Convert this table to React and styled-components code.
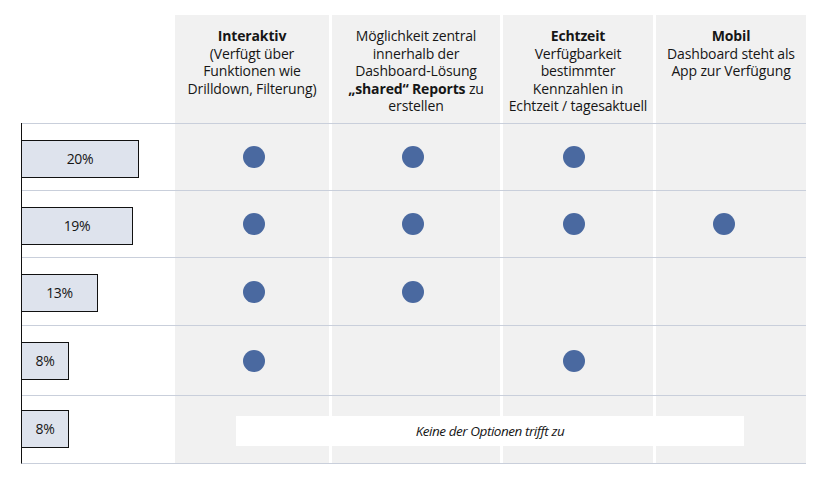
import React from "react";
import styled, { createGlobalStyle } from "styled-components";

const Global = createGlobalStyle`
  html, body { margin: 0; padding: 0; background: #ffffff; }
  body { font-family: "Open Sans", "Liberation Sans", sans-serif; color: #1a1a1a; }
`;

const Page = styled.div`
  width: 820px;
  height: 480px;
  padding-top: 15px;
  box-sizing: border-box;
`;

const Header = styled.div`
  display: grid;
  grid-template-columns: 172px 154px 168px 150px 150px;
  column-gap: 3px;
  height: 108px;
`;

const HeadCell = styled.div`
  background: #f1f1f1;
  padding-top: 12px;
  text-align: center;
  font-size: 14px;
  line-height: 17.6px;
  letter-spacing: -0.15px;
  color: #161616;
  b { font-weight: 700; }
`;

const Blank = styled.div``;

const Body = styled.div`
  margin-left: 21px;
  width: 785px;
  border-left: 1px solid #111;
  box-sizing: border-box;
  border-bottom: 1px solid #c9cfdb;
`;

const Row = styled.div`
  display: grid;
  grid-template-columns: 150px 154px 168px 150px 150px;
  column-gap: 3px;
  height: ${(p) => p.$h}px;
  border-top: 1px solid #c9cfdb;
  box-sizing: border-box;
`;

const LabelCell = styled.div`
  display: flex;
  align-items: center;
  grid-row: 1;
  grid-column: 1;
`;

const Bar = styled.div`
  margin-left: -1px;
  height: 38px;
  box-sizing: border-box;
  border: 1px solid #111;
  background: #dee3ed;
  display: flex;
  align-items: center;
  justify-content: center;
  font-size: 14px;
  letter-spacing: -0.3px;
  color: #161616;
  margin-top: ${(p) => p.$dy}px;
`;

const DotCell = styled.div`
  grid-row: 1;
  background: #f1f1f1;
  display: flex;
  align-items: center;
  justify-content: center;
  padding-left: ${(p) => (p.$shift > 0 ? p.$shift : 0)}px;
  padding-right: ${(p) => (p.$shift < 0 ? -p.$shift : 0)}px;
`;

const Dot = styled.span`
  width: 22px;
  height: 22px;
  border-radius: 50%;
  background: #4a69a0;
`;

const NoneBox = styled.div`
  grid-row: 1;
  grid-column: 2 / span 4;
  align-self: center;
  margin: 3px 62px 0 61px;
  height: 30px;
  background: #ffffff;
  display: flex;
  align-items: center;
  justify-content: center;
  font-style: italic;
  font-size: 13.5px;
  letter-spacing: -0.45px;
  color: #161616;
  z-index: 1;
`;

const shifts = [2, -3, -4, -7];

const rows = [
  { pct: 20, h: 67, dy: 3, dots: [1, 1, 1, 0] },
  { pct: 19, h: 67, dy: 3, dots: [1, 1, 1, 1] },
  { pct: 13, h: 68, dy: 2, dots: [1, 1, 0, 0] },
  { pct: 8, h: 70, dy: 0, dots: [1, 0, 1, 0] },
  { pct: 8, h: 68, dy: -2, dots: [0, 0, 0, 0], none: true },
];

export default function App() {
  return (
    <Page>
      <Global />
      <Header>
        <Blank />
        <HeadCell>
          <b>Interaktiv</b>
          <br />
          (Verfügt über
          <br />
          Funktionen wie
          <br />
          Drilldown, Filterung)
        </HeadCell>
        <HeadCell>
          Möglichkeit zentral
          <br />
          innerhalb der
          <br />
          Dashboard-Lösung
          <br />
          <b>„shared“ Reports</b> zu
          <br />
          erstellen
        </HeadCell>
        <HeadCell>
          <b>Echtzeit</b>
          <br />
          Verfügbarkeit
          <br />
          bestimmter
          <br />
          Kennzahlen in
          <br />
          Echtzeit / tagesaktuell
        </HeadCell>
        <HeadCell>
          <b>Mobil</b>
          <br />
          Dashboard steht als
          <br />
          App zur Verfügung
        </HeadCell>
      </Header>
      <Body>
        {rows.map((r, i) => (
          <Row key={i} $h={r.h}>
            <LabelCell>
              <Bar $dy={r.dy} style={{ width: Math.round(r.pct * 5.85) + 1 }}>
                {r.pct}%
              </Bar>
            </LabelCell>
            {r.dots.map((d, j) => (
              <DotCell key={j} $shift={shifts[j] * 2} style={{ gridColumn: j + 2 }}>
                {d ? <Dot /> : null}
              </DotCell>
            ))}
            {r.none ? <NoneBox>Keine der Optionen trifft zu</NoneBox> : null}
          </Row>
        ))}
      </Body>
    </Page>
  );
}
